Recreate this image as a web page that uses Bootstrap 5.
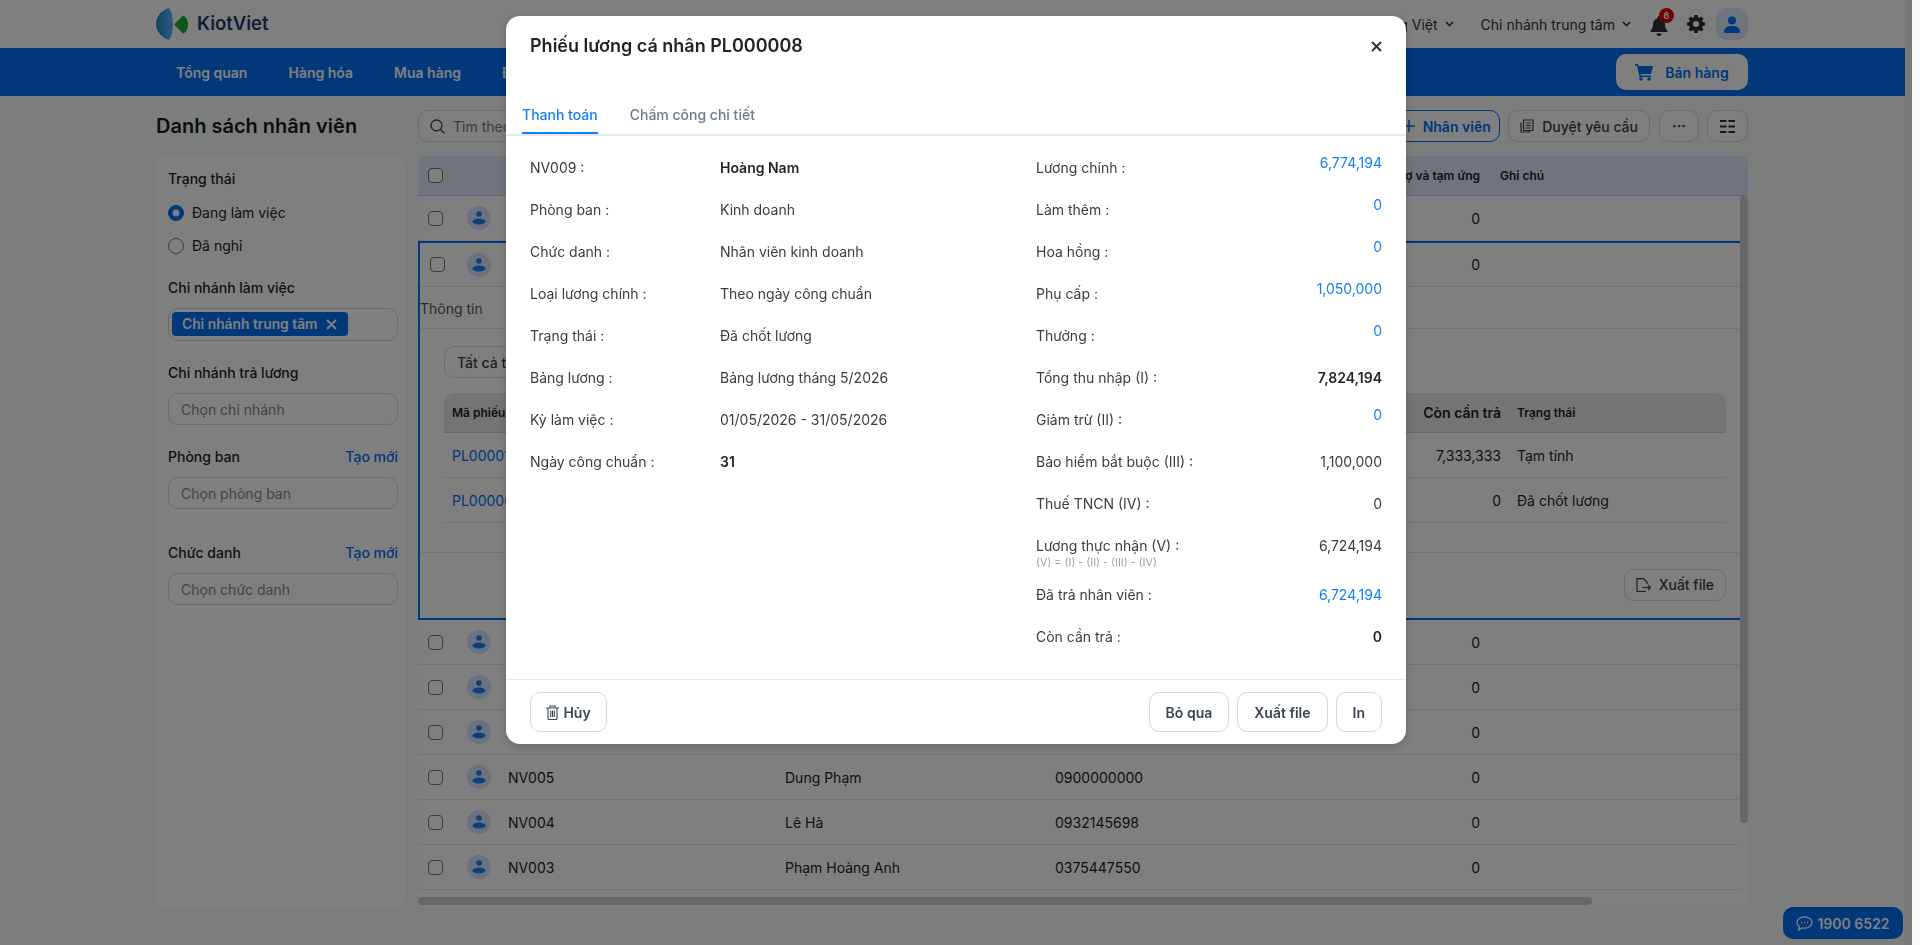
<!DOCTYPE html>
<html lang="vi">
<head>
    <meta charset="UTF-8">
    <meta name="viewport" content="width=device-width, initial-scale=1.0">
    <title>Danh sách nhân viên</title>
    <link href="https://cdn.jsdelivr.net/npm/bootstrap@5.3.0/dist/css/bootstrap.min.css" rel="stylesheet">
    <style>
        html, body { height: 100%; }
        body { font-family: Inter, "Noto Sans", sans-serif; font-size: 14px; color: #1f2328; background: #f8f9fa; overflow: hidden; }
        .app-shell { width: 1905px; height: 945px; background: #f8fcfa; flex: none; }
        .page-track { width: 7px; height: 945px; background: #f0f2f4; flex: none; }
        .wrap-main { width: 1592px; margin-left: 156px; }

        .top-bar { height: 48px; background: #fff; }
        .logo-text { font-size: 18.500px; font-weight: 600; color: #1b3f74; margin-left: 9px; }
        .top-hidden-icon { margin-left: 850px; }
        .top-item { color: #333; white-space: nowrap; }
        .top-caret { margin-left: 7px; }
        .avatar-box { width: 32px; height: 32px; border-radius: 10px; background: #dce8f8; }
        .bell-box { position: relative; width: 20px; height: 20px; }
        .bell-count { position: absolute; top: -6px; right: -5px; width: 15px; height: 15px; border-radius: 50%; background: #e00000; color: #fff; font-size: 9px; font-weight: 600; line-height: 15px; text-align: center; }

        .menu-bar { height: 48px; background: #0070f4; }
        .menu-link { color: #fff; font-weight: 600; padding: 0 20.500px; text-decoration: none; }
        .menu-link:first-child { margin-left: -.5px; }
        .sell-btn { width: 132px; height: 36px; background: #fff; color: #0070f4; font-weight: 600; border: 0; border-radius: 10px; font-size: 14px; }
        .sell-btn:hover { background: #fff; color: #0070f4; }

        .tool-row { height: 32px; margin-top: 14px; }
        .page-title { font-size: 20px; font-weight: 600; color: #1a1a1a; width: 262px; margin: 0; }
        .search-box { height: 32px; border: 1px solid #d5d7da; border-radius: 10px; background: #fff; padding: 0 11px; color: #777; flex: 1; min-width: 0; }
        .tool-btn { height: 32px; border: 1px solid #d5d7da; border-radius: 10px; background: #fff; color: #3a3f47; font-weight: 500; font-size: 14px; padding: 0 11px; white-space: nowrap; }
        .tool-btn-blue { border-color: #0070f4; color: #0070f4; width: 107px; font-weight: 600; }
        .tool-btn-square { width: 40px; padding: 0; }
        .tool-btn-grid { width: 41px; }
        .tool-gap-wide { margin-left: 1px; }
        .filter-all { padding-left: 12px; }

        .content-row { margin-top: 14px; }
        .filter-side { width: 250px; height: 754px; background: #fff; border-radius: 8px; padding: 13px 8px 0 12px; box-shadow: 0 0 6px rgba(0,0,0,.03); flex: none; }
        .filter-title { font-weight: 500; color: #1f2328; line-height: 20px; }
        .filter-side .form-check { min-height: 20px; padding-left: 24px; margin-bottom: 0; line-height: 20px; }
        .filter-side .form-check-input { width: 16px; height: 16px; margin: 2px 0 0 -24px; border-color: #777; }
        .filter-side .form-check-input:checked { background-color: #0070f4; border-color: #0070f4; }
        .filter-input { height: 32px; border: 1px solid #d5d7da; border-radius: 10px; font-size: 14px; padding: 0 12px; color: #333; }
        .filter-input::placeholder { color: #888; }
        .tag-box { height: 33px; border: 1px solid #d5d7da; border-radius: 10px; padding: 3px; }
        .tag-pill { width: 176px; height: 24px; background: #0070f4; color: #fff; border-radius: 4px; font-weight: 600; padding: 0 11px 0 10px; font-size: 13.800px; }
        .create-link { color: #0070f4; text-decoration: none; font-weight: 500; }
        .gap-b { margin-top: 10px; }

        .table-panel { position: relative; width: 1330px; height: 749px; margin-left: 12px; background: #fff; border-radius: 8px 8px 0 0; overflow: hidden; flex: none; }
        .emp-grid { display: grid; grid-template-columns: 49px 41px 277px 270px 245px 185px 1fr; align-items: center; }
        .emp-head { height: 40px; background: #e0ebfa; border-bottom: 1px solid #b8d0f0; font-size: 12px; font-weight: 600; }
        .emp-list { width: 1322px; }
        .emp-row { height: 45px; border-bottom: 1px solid #e4e6e8; }
        .emp-grid .form-check-input { width: 15px; height: 15px; margin: 0 0 0 10px; border-radius: 4px; border-color: #777; }
        .num-cell { text-align: right; padding-right: 5px; }
        .note-cell { padding-left: 15px; }
        .face-dot { width: 24px; height: 24px; border-radius: 50%; background: #d2e4fc; }

        .open-row { height: 379px; border: solid #0070f4; border-width: 2px 0 2px 2px; }
        .open-row .emp-grid { grid-template-columns: 47px 41px 277px 270px 245px 185px 1fr; height: 44px; }
        .info-tab { height: 42px; line-height: 43px; color: #555; font-size: 14px; border-bottom: 1px solid #e4e6e8; }
        .info-body { height: 224px; padding: 17px 14px 0 24px; border-bottom: 1px solid #e4e6e8; }
        .slip-grid { display: grid; grid-template-columns: 300px 500px 249px 1fr; align-items: center; }
        .slip-head { height: 40px; background: #e8e9ea; border-bottom: 1px solid #cfd1d3; border-radius: 10px 10px 0 0; font-size: 12px; font-weight: 600; margin-top: 15px; padding-left: 8px; }
        .slip-row { height: 45px; border-bottom: 1px solid #e4e6e8; padding-left: 8px; }
        .slip-num { font-size: 14px; font-weight: 600; text-align: right; }
        .slip-code { color: #0070f4; }
        .slip-state { padding-left: 16px; }
        .info-foot { height: 63px; padding-right: 14px; }

        .thumb-y { position: absolute; top: 40px; right: 0; width: 8px; height: 627px; background: #cdced6; border-radius: 4px; }
        .thumb-x { position: absolute; left: 0; bottom: 0; width: 1174px; height: 8px; background: #cdced6; border-radius: 4px; }

        .hotline-btn { position: fixed; left: 1783px; top: 907px; width: 120px; height: 32px; background: #0070f4; color: #fff; border-radius: 10px; font-weight: 600; font-size: 14px; }

        .modal-backdrop.cover-left { width: 1912px; }
        .modal.pay-modal { width: 1912px; }
        .pay-modal .modal-dialog { max-width: 900px; margin: 16px auto; }
        .pay-modal .modal-content { height: 728px; border: 0; border-radius: 14px; box-shadow: 0 2px 8px rgba(0,0,0,.18); }
        .pay-modal .modal-header { height: 60px; border: 0; padding: 0 24px; align-items: center; }
        .pay-modal .modal-title { font-size: 18px; font-weight: 600; color: #1f2328; line-height: 36px; }
        .pay-tabs { height: 60px; padding: 20px 14px 0 16px; border-bottom: 2px solid #e9eaec; gap: 32px; flex-wrap: nowrap; }
        .pay-tab { display: block; height: 38px; color: #6b7a90; font-weight: 500; text-decoration: none; line-height: 38px; }
        .pay-tab-on { color: #147ff6; border-bottom: 2px solid #147ff6; }
        .pay-modal .modal-body { padding: 10px 24px 0 24px; }
        .pay-left { width: 506px; }
        .pay-right { width: 346px; }
        .pay-line { height: 42px; color: #383d44; }
        .pay-key { width: 190px; flex: none; }
        .pay-val-strong { font-weight: 600; color: #1f2328; }
        .pay-blue { color: #147ff6; align-self: flex-start; padding-top: 6px; }
        .pay-paid { color: #147ff6; }
        .pay-tall { height: 49px; padding-bottom: 7px; position: relative; }
        .pay-note { position: absolute; top: 33px; left: 0; font-size: 10.800px; color: #9aa1ad; line-height: 12px; }
        .pay-modal .modal-footer { height: 65px; padding: 12px 24px; border-top: 1px solid #e9eaec; flex-wrap: nowrap; gap: 8px; }
        .pay-modal .modal-footer > * { margin: 0; }
        .pay-foot-btn { height: 40px; border: 1px solid #d5d7da; border-radius: 10px; background: #fff; color: #3a4656; font-weight: 600; font-size: 14px; padding: 0 16px; }
        .pay-del { margin-right: auto !important; width: 77px; padding: 0; }
        .close-x { background: none; border: 0; padding: 0; line-height: 0; }
    </style>
</head>
<body class="d-flex">
    <div class="app-shell">
        <div class="top-bar">
            <div class="wrap-main d-flex align-items-center h-100">
                <svg width="32" height="32" viewBox="0 0 32 32">
                    <defs><linearGradient id="lensBlue" x1="0" x2="1" y1="0" y2="0"><stop offset="0" stop-color="#1c86c4"/><stop offset="1" stop-color="#6ab4fb"/></linearGradient></defs>
                    <path d="M13 0.300C16 4 17 10 17 16s-1 12-4 15.700C7 31 0 24 0 16S7 1 13 0.300z" fill="url(#lensBlue)"/>
                    <path d="M18 16.500L27 7.500c3 1 5 4.500 5 9s-2 8-5 9z" fill="#1fa83a"/>
                </svg>
                <span class="logo-text">KiotViet</span>
                <svg class="top-hidden-icon" width="16" height="16" viewBox="0 0 16 16" fill="#0070f4"><circle cx="8" cy="4" r="3"/><path d="M2 15c0-4 3-6 6-6s6 2 6 6z"/></svg>
                <div class="ms-auto d-flex align-items-center">
                    <span class="top-item">Tiếng Việt</span>
                    <svg class="top-caret" width="9" height="6" viewBox="0 0 9 6" fill="none" stroke="#333" stroke-width="1.600"><path d="M1 1l3.500 3.500L8 1"/></svg>
                    <span class="top-item" style="margin-left:27px">Chi nhánh trung tâm</span>
                    <svg class="top-caret" width="9" height="6" viewBox="0 0 9 6" fill="none" stroke="#333" stroke-width="1.600"><path d="M1 1l3.500 3.500L8 1"/></svg>
                    <div class="bell-box" style="margin-left:18px">
                        <svg width="20" height="20" viewBox="0 0 20 20" fill="#2b2f36"><path d="M10 0a1.500 1.500 0 0 0-1.500 1.500v.7C5.500 3 4 5.500 4 8.500c0 3-1 4.500-2.500 6.500v1h17v-1C17 13 16 11.500 16 8.500c0-3-1.500-5.500-4.500-6.300v-.7A1.500 1.500 0 0 0 10 0z"/><path d="M7.500 17.500h5A2.500 2.500 0 0 1 7.500 17.500z"/></svg>
                        <span class="bell-count">6</span>
                    </div>
                    <svg style="margin-left:18px" width="18" height="18" viewBox="0 0 18 18" fill="#2b2f36"><path fill-rule="evenodd" d="M7.400 0h3.200l.4 2.300 1.300.6L14.300 1.500l2.200 2.200-1.400 2 .6 1.400 2.300.4v3.100l-2.300.4-.6 1.400 1.400 2-2.200 2.200-2-1.400-1.300.6-.4 2.200H7.400L7 15.800l-1.300-.6-2 1.400-2.200-2.200 1.400-2-.6-1.400L0 10.600V7.500l2.300-.4.6-1.400-1.400-2 2.200-2.200 2 1.400L7 2.300zM9 6a3 3 0 1 0 0 6 3 3 0 0 0 0-6z"/></svg>
                    <div class="avatar-box d-flex align-items-center justify-content-center" style="margin-left:11px">
                        <svg width="16" height="17" viewBox="0 0 16 17" fill="#0070f4"><circle cx="8" cy="4.500" r="4"/><path d="M1.500 17a2 2 0 0 1-1.500-2c0-3 3-5 8-5s8 2 8 5a2 2 0 0 1-1.500 2z"/></svg>
                    </div>
                </div>
            </div>
        </div>
        <div class="menu-bar">
            <div class="wrap-main d-flex align-items-center h-100">
                <a class="menu-link" href="#">Tổng quan</a>
                <a class="menu-link" href="#">Hàng hóa</a>
                <a class="menu-link" href="#">Mua hàng</a>
                <a class="menu-link" href="#">Đơn hàng</a>
                <button class="btn sell-btn ms-auto d-flex align-items-center justify-content-center gap-2 p-0">
                    <svg width="18" height="17" viewBox="0 0 18 17" fill="#0070f4"><path d="M0 0h3l.7 2H18l-2 8H5.500l.4 1.500H16V13H4.500L2 1.500H0z"/><circle cx="6" cy="15" r="1.800"/><circle cx="14" cy="15" r="1.800"/></svg>
                    <span class="ms-1">Bán hàng</span>
                </button>
            </div>
        </div>

        <div class="wrap-main">
            <div class="tool-row d-flex align-items-center">
                <h1 class="page-title">Danh sách nhân viên</h1>
                <div class="search-box d-flex align-items-center gap-2">
                    <svg width="15" height="15" viewBox="0 0 15 15" fill="none" stroke="#444" stroke-width="1.300"><circle cx="6.500" cy="6.500" r="5.500"/><path d="M10.500 10.500L14.500 14.500"/></svg>
                    <span>Tìm theo</span>
                </div>
                <div class="d-flex align-items-center gap-2 ms-2">
                    <button class="btn tool-btn tool-btn-blue d-flex align-items-center justify-content-center gap-2 p-0">
                        <svg width="12" height="12" viewBox="0 0 12 12" stroke="#0070f4" stroke-width="1.500"><path d="M0 6h12M6 0v12"/></svg>
                        Nhân viên
                    </button>
                    <button class="btn tool-btn d-flex align-items-center gap-2">
                        <svg width="14" height="14" viewBox="0 0 14 14" fill="none" stroke="#3a3f47" stroke-width="1.200"><path d="M3.500 1h9.500v10.500H3.500zM1 3.500v9.500h9.500M5.500 4h5.500M5.500 6.500h5.500M5.500 9h5.500"/></svg>
                        Duyệt yêu cầu
                    </button>
                    <button class="btn tool-btn tool-btn-square tool-gap-wide fw-bold lh-1">···</button>
                    <button class="btn tool-btn tool-btn-square tool-btn-grid d-flex align-items-center justify-content-center">
                        <svg width="15" height="13" viewBox="0 0 15 13" fill="#2b2f36"><path d="M0 0h6.500v2H0zM8.500 0H15v2H8.500zM0 5.500h6.500v2H0zM8.500 5.500H15v2H8.500zM0 11h6.500v2H0zM8.500 11H15v2H8.500z"/></svg>
                    </button>
                </div>
            </div>

            <div class="content-row d-flex align-items-start">
                <aside class="filter-side">
                    <div class="filter-title">Trạng thái</div>
                    <div class="form-check" style="margin-top:14px">
                        <input class="form-check-input" type="radio" name="st" checked>
                        <label class="form-check-label">Đang làm việc</label>
                    </div>
                    <div class="form-check" style="margin-top:13px">
                        <input class="form-check-input" type="radio" name="st">
                        <label class="form-check-label">Đã nghỉ</label>
                    </div>
                    <div class="filter-title" style="margin-top:22px">Chi nhánh làm việc</div>
                    <div class="tag-box gap-b">
                        <div class="tag-pill d-flex align-items-center justify-content-between">
                            <span>Chi nhánh trung tâm</span>
                            <svg width="11" height="11" viewBox="0 0 11 11" stroke="#fff" stroke-width="2"><path d="M1 1l9 9M10 1l-9 9"/></svg>
                        </div>
                    </div>
                    <div class="filter-title" style="margin-top:22px">Chi nhánh trả lương</div>
                    <input class="form-control filter-input gap-b" placeholder="Chọn chi nhánh">
                    <div class="filter-title d-flex justify-content-between" style="margin-top:22px"><span>Phòng ban</span><a class="create-link" href="#">Tạo mới</a></div>
                    <input class="form-control filter-input gap-b" placeholder="Chọn phòng ban">
                    <div class="filter-title d-flex justify-content-between" style="margin-top:34px"><span>Chức danh</span><a class="create-link" href="#">Tạo mới</a></div>
                    <input class="form-control filter-input gap-b" placeholder="Chọn chức danh">
                </aside>

                <section class="table-panel">
                    <div class="emp-grid emp-head">
                        <input class="form-check-input" type="checkbox">
                        <span></span>
                        <span></span>
                        <span></span>
                        <span></span>
                        <span class="num-cell">Nợ và tạm ứng</span>
                        <span class="note-cell">Ghi chú</span>
                    </div>
                    <div class="emp-list" id="empList"></div>
                    <div class="thumb-y"></div>
                    <div class="thumb-x"></div>
                </section>
            </div>
        </div>
    </div>
    <div class="page-track"></div>

    <div class="hotline-btn d-flex align-items-center justify-content-center gap-1">
        <svg width="17" height="15" viewBox="0 0 17 15" fill="none" stroke="#fff" stroke-width="1.300"><path d="M8.500 1C4.400 1 1 3.400 1 6.500c0 1.700 1 3.100 2.400 4.100L2.500 14l3.700-2c.7.100 1.500.200 2.300.200 4.100 0 7.500-2.600 7.500-5.700S12.600 1 8.500 1z"/><path d="M5 6.500h1M8 6.500h1M11 6.500h1"/></svg>
        <span>1900 6522</span>
    </div>

    <div class="modal-backdrop fade show cover-left"></div>
    <div class="modal pay-modal d-block" tabindex="-1">
        <div class="modal-dialog">
            <div class="modal-content">
                <div class="modal-header">
                    <h5 class="modal-title">Phiếu lương cá nhân PL000008</h5>
                    <button class="close-x ms-auto" type="button" aria-label="Close">
                        <svg width="11" height="11" viewBox="0 0 11 11" stroke="#333" stroke-width="2"><path d="M1 1l9 9M10 1l-9 9"/></svg>
                    </button>
                </div>
                <div class="pay-tabs d-flex">
                    <a class="pay-tab pay-tab-on" href="#">Thanh toán</a>
                    <a class="pay-tab" href="#">Chấm công chi tiết</a>
                </div>
                <div class="modal-body d-flex">
                    <div class="pay-left" id="payLeft"></div>
                    <div class="pay-right" id="payRight"></div>
                </div>
                <div class="modal-footer">
                    <button class="btn pay-foot-btn pay-del d-flex align-items-center justify-content-center gap-1">
                        <svg width="13" height="15" viewBox="0 0 13 15" fill="none" stroke="#3a4656" stroke-width="1.100"><path d="M0 3h13M4 3V1h5v2M2 3v10.500a1 1 0 0 0 1 1h7a1 1 0 0 0 1-1V3M4.700 5.500v6.500M6.500 5.500v6.500M8.300 5.500v6.500"/></svg>
                        Hủy
                    </button>
                    <button class="btn pay-foot-btn">Bỏ qua</button>
                    <button class="btn pay-foot-btn">Xuất file</button>
                    <button class="btn pay-foot-btn">In</button>
                </div>
            </div>
        </div>
    </div>

    <script src="https://cdn.jsdelivr.net/npm/bootstrap@5.3.0/dist/js/bootstrap.bundle.min.js"></script>
    <script>
        const faceIcon = `<div class="face-dot d-flex align-items-center justify-content-center"><svg width="14" height="14" viewBox="0 0 14 14" fill="#1f7ef0"><circle cx="7" cy="3" r="2.800"/><ellipse cx="7" cy="10.500" rx="6.500" ry="3"/></svg></div>`;
        const box = `<input class="form-check-input" type="checkbox">`;

        function empRow(code, name, phone) {
            return `<div class="emp-grid emp-row">${box}${faceIcon}<span>${code}</span><span>${name}</span><span>${phone}</span><span class="num-cell">0</span><span></span></div>`;
        }

        const slips = [
            ['PL000016', '7,333,333', 'Tạm tính'],
            ['PL000008', '0', 'Đã chốt lương']
        ];
        const slipRows = slips.map(s => `<div class="slip-grid slip-row"><span class="slip-code">${s[0]}</span><span></span><span class="text-end">${s[1]}</span><span class="slip-state">${s[2]}</span></div>`).join('');

        const openRow = `
            <div class="open-row">
                ${empRow('', '', '')}
                <div class="info-tab">Thông tin</div>
                <div class="info-body">
                    <button class="btn tool-btn filter-all">Tất cả t</button>
                    <div class="slip-grid slip-head"><span>Mã phiếu</span><span></span><span class="slip-num">Còn cần trả</span><span class="slip-state">Trạng thái</span></div>
                    ${slipRows}
                </div>
                <div class="info-foot d-flex align-items-center justify-content-end">
                    <button class="btn tool-btn d-flex align-items-center gap-1">
                        <svg class="me-1" width="15" height="14" viewBox="0 0 15 14" fill="none" stroke="#3a3f47" stroke-width="1.200"><path d="M10 13.500H1V.7h6.500L11 4v2M6.500 9.500h8M12 7l2.500 2.500L12 12"/></svg>
                        Xuất file
                    </button>
                </div>
            </div>`;

        document.getElementById('empList').innerHTML =
            empRow('', '', '') + openRow +
            empRow('', '', '') + empRow('', '', '') + empRow('', '', '') +
            empRow('NV005', 'Dung Phạm', '0900000000') +
            empRow('NV004', 'Lê Hà', '0932145698') +
            empRow('NV003', 'Phạm Hoàng Anh', '0375447550');

        const leftData = [
            ['NV009 :', 'Hoàng Nam', true],
            ['Phòng ban :', 'Kinh doanh'],
            ['Chức danh :', 'Nhân viên kinh doanh'],
            ['Loại lương chính :', 'Theo ngày công chuẩn'],
            ['Trạng thái :', 'Đã chốt lương'],
            ['Bảng lương :', 'Bảng lương tháng 5/2026'],
            ['Kỳ làm việc :', '01/05/2026 - 31/05/2026'],
            ['Ngày công chuẩn :', '31', true]
        ];
        document.getElementById('payLeft').innerHTML = leftData.map(d =>
            `<div class="pay-line d-flex align-items-center"><span class="pay-key">${d[0]}</span><span class="${d[2] ? 'pay-val-strong' : ''}">${d[1]}</span></div>`
        ).join('');

        const rightData = [
            ['Lương chính :', '6,774,194', 'pay-blue'],
            ['Làm thêm :', '0', 'pay-blue'],
            ['Hoa hồng :', '0', 'pay-blue'],
            ['Phụ cấp :', '1,050,000', 'pay-blue'],
            ['Thưởng :', '0', 'pay-blue'],
            ['Tổng thu nhập (I) :', '7,824,194', 'pay-val-strong'],
            ['Giảm trừ (II) :', '0', 'pay-blue'],
            ['Bảo hiểm bắt buộc (III) :', '1,100,000', ''],
            ['Thuế TNCN (IV) :', '0', '']
        ];
        document.getElementById('payRight').innerHTML = rightData.map(d =>
            `<div class="pay-line d-flex align-items-center justify-content-between"><span>${d[0]}</span><span class="${d[2]}">${d[1]}</span></div>`
        ).join('') + `
            <div class="pay-line pay-tall d-flex align-items-center justify-content-between"><span>Lương thực nhận (V) :</span><span>6,724,194</span><span class="pay-note">(V) = (I) - (II) - (III) - (IV)</span></div>
            <div class="pay-line d-flex align-items-center justify-content-between"><span>Đã trả nhân viên :</span><span class="pay-paid">6,724,194</span></div>
            <div class="pay-line d-flex align-items-center justify-content-between"><span>Còn cần trả :</span><span class="pay-val-strong">0</span></div>`;
    </script>
</body>
</html>
